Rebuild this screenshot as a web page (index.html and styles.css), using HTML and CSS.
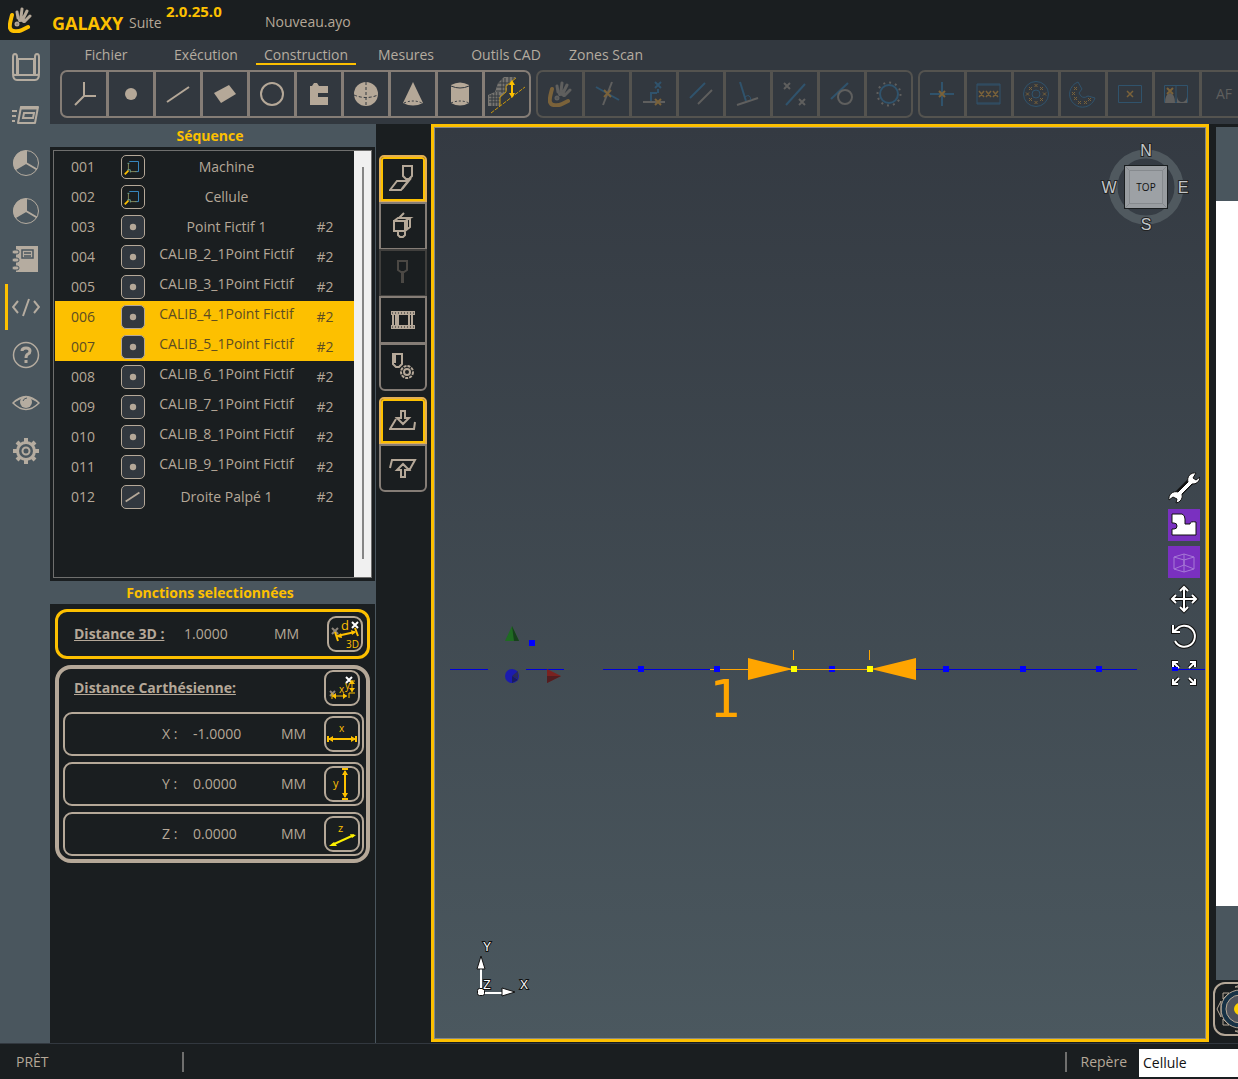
FILE: index.html
```html
<!DOCTYPE html>
<html lang="fr">
<head>
<meta charset="utf-8">
<title>GALAXY Suite - Nouveau.ayo</title>
<link rel="stylesheet" href="styles.css">
</head>
<body>
<svg class="defs" aria-hidden="true">
  <symbol id="hand" viewBox="0 0 24 26"><path class="thumb" d="M4 8C3 12 1 18 2 21c1 4 8 4 12 2l6-3" fill="none" stroke-width="4" stroke-linecap="round" stroke-linejoin="round"/><g class="fingers" fill="none" stroke-width="3" stroke-linecap="round"><path d="M10 11 9 5M13 10 14 2M15 12 19 4M17 14 22 9"/><path d="M12 13q2-1 4 1" stroke-width="4"/><circle cx="9" cy="17" r="1"/></g></symbol>
  <symbol id="point" viewBox="0 0 24 24"><circle cx="12" cy="12" r="3.500" fill="#b5a898"/></symbol>
  <symbol id="line" viewBox="0 0 24 24"><path d="M4 17 19 7" stroke="#b5a898" stroke-width="2"/></symbol>
  <symbol id="frame" viewBox="0 0 24 24"><path d="M8 6h10v11h-4" fill="none" stroke="#3a8fce"/><path d="M7 16V8M9 17h7" stroke="#8a8c5a"/><path d="M3 20 7 16" stroke="#fdc000" stroke-width="2"/><path d="M6 15h3v3M6 8h2" fill="none" stroke="#6fae9d"/></symbol>
  <symbol id="pie" viewBox="0 0 28 28"><circle cx="14" cy="14" r="12.5" fill="none" stroke="#b5aca0"/><path d="M14 14V1.500A12.500 12.500 0 0 0 3 20.500Z" fill="#b5aca0"/><path d="M14 1.500V14L3 20.500M14 14 25 20.500" fill="none" stroke="#b5aca0" stroke-width="2"/></symbol>
</svg>

<div class="app">
  <header class="header">
    <svg class="logo" width="24" height="26"><use href="#hand"/></svg>
    <span class="brand">GALAXY</span><span class="suite">Suite</span><span class="version">2.0.25.0</span>
    <span class="file">Nouveau.ayo</span>
  </header>

  <div class="body">
    <nav class="side" aria-label="Navigation">
      <button aria-label="Machine"><svg width="28" height="28" fill="none" stroke="#b5aca0" stroke-width="2"><path d="M6 6h16v16H6zM1 4q0-3 2-3t2 3v18H3q-2 0-2-2zM27 4q0-3-2-3t-2 3v18h2q2 0 2-2zM1 21q0 6 4 6h18q4 0 4-6"/></svg></button>
      <button aria-label="Pièces"><svg width="28" height="28" fill="none" stroke="#b5aca0" stroke-width="2"><path d="M9 6h17l-3 16H6z" stroke-linejoin="round"/><path d="M12 12h10l-1 5H11z"/><path d="M8 7h17" stroke-width="3"/><path d="M0 10h5M0 15h4M0 20h3"/></svg></button>
      <button aria-label="Rapport 1"><svg width="28" height="28"><use href="#pie"/></svg></button>
      <button aria-label="Rapport 2"><svg width="28" height="28"><use href="#pie"/></svg></button>
      <button aria-label="Carnet"><svg width="28" height="28"><path d="M4 1h22v26H4z" fill="#b5aca0"/><g fill="none" stroke="#4a565e"><path d="M10 5h11v8H10zM12 8h7M12 11h7" stroke-width="1.500"/></g><g fill="#b5aca0" stroke="#4a565e"><rect x="0" y="5" width="7" height="4" rx="2"/><rect x="0" y="13" width="7" height="4" rx="2"/><rect x="0" y="21" width="7" height="4" rx="2"/></g></svg></button>
      <button class="current" aria-label="Programme"><svg width="28" height="28" fill="none" stroke="#b5aca0" stroke-width="2"><path d="M6 8 1 14l5 6M22 8l5 6-5 6M17 6 11 23"/></svg></button>
      <button aria-label="Aide"><svg width="28" height="28" fill="none" stroke="#b5aca0"><circle cx="14" cy="14" r="12.500" stroke-width="1.500"/><path d="M10 10q0-3 4-3t4 3q0 2-2 3t-2 4" stroke-width="3"/><path d="M14 19v3" stroke-width="3"/></svg></button>
      <button aria-label="Affichage"><svg width="28" height="28"><path d="M1 14Q14 1 27 14 14 27 1 14z" fill="none" stroke="#b5aca0" stroke-width="1.500"/><path d="M1 14Q14 1 27 14L23 12Q14 6 5 12z" fill="#b5aca0"/><circle cx="14" cy="13" r="6" fill="#b5aca0"/><path d="M11 12q1-3 4-3" stroke="#4a565e" fill="none"/></svg></button>
      <button aria-label="Réglages"><svg width="28" height="28" fill="none" stroke="#b5aca0"><circle cx="14" cy="14" r="8.500" stroke-width="3"/><circle cx="14" cy="14" r="3.500" stroke-width="2"/><path d="M14 1v4M14 23v4M1 14h4M23 14h4M5 5l3 3M20 20l3 3M23 5l-3 3M8 20l-3 3" stroke-width="4"/></svg></button>
    </nav>

    <div class="work">
      <div class="ribbon">
        <nav class="tabs" aria-label="Menus">
          <a href="#fichier">Fichier</a><a href="#execution">Exécution</a><a href="#construction" class="active">Construction</a><a href="#mesures">Mesures</a><a href="#outils">Outils CAD</a><a href="#zones">Zones Scan</a>
        </nav>
        <div class="groups">
          <div class="group">
            <button aria-label="Repère"><svg width="40" height="40" fill="none" stroke="#b5a898" stroke-width="2"><path d="M20 8v14h12M20 22 11 31"/></svg></button>
            <button aria-label="Point"><svg width="40" height="40"><circle cx="20" cy="20" r="6" fill="#b5a898"/></svg></button>
            <button aria-label="Droite"><svg width="40" height="40"><path d="M9 28 31 13" stroke="#b5a898" stroke-width="2"/></svg></button>
            <button aria-label="Plan"><svg width="40" height="40"><path d="M9 19 24 11 31 20 16 29z" fill="#b5a898"/></svg></button>
            <button aria-label="Cercle"><svg width="40" height="40"><circle cx="20" cy="20" r="11" fill="none" stroke="#b5a898" stroke-width="2"/></svg></button>
            <button aria-label="Contour"><svg width="40" height="40"><path d="M11 12h2l2-3h3l2 3h9v7H19v4h10v8H11z" fill="#b5a898"/></svg></button>
            <button aria-label="Sphère"><svg width="40" height="40"><circle cx="20" cy="20" r="12" fill="#b5a898"/><path d="M20 8v24M8 21q12 5 24 0" stroke="#32383f" stroke-dasharray="3 2" fill="none"/></svg></button>
            <button aria-label="Cône"><svg width="40" height="40"><path d="M20 8 30 29Q20 34 10 29z" fill="#b5a898"/><path d="M11 29q9-4 18 0" stroke="#32383f" stroke-dasharray="2 2" fill="none"/></svg></button>
            <button aria-label="Cylindre"><svg width="40" height="40"><path d="M11 11q9-5 18 0v18q-9 5-18 0z" fill="#b5a898"/><path d="M11 12q9 4 18 0" stroke="#32383f" fill="none"/><path d="M11 29q9-4 18 0" stroke="#32383f" stroke-dasharray="2 2" fill="none"/></svg></button>
            <button aria-label="Distance surface"><svg width="40" height="40"><path d="M11 9 17 3H29L20 12V16L13 24V32H1V21L8 18z" fill="#777571"/><path d="M2 22h11M2 25h11M2 28h11M5 20v12M8 18v14M11 18v14M11 9h12M10 13h10M9 17h10M15 5v14M18 4v14M22 3v8M26 3v4" stroke="#32383f"/><path d="M29 4 19 12v6l-6 5v9" stroke="#c7960c" fill="none"/><path d="M4 39 38 13" stroke="#c7960c" stroke-dasharray="4 1"/><path d="M25 9v12" stroke="#fdc000" stroke-width="2"/><path d="M25 6l3 5h-6zM25 24l3-5h-6z" fill="#fdc000"/></svg></button>
          </div>
          <div class="group off">
            <button disabled aria-label="Palpage manuel"><svg class="dimhand" width="24" height="26"><use href="#hand"/></svg></button>
            <button disabled aria-label="Intersection"><svg width="40" height="40" fill="none" stroke-width="2"><path d="M9 13 32 26" stroke="#30536c"/><path d="M25 8 16 31" stroke="#5f5f5e"/><path d="M17 16l7 7M24 16l-7 7" stroke="#7a623a"/></svg></button>
            <button disabled aria-label="Projection"><svg width="40" height="40" fill="none" stroke-width="2"><path d="M21 8l6 6M27 8l-6 6M24 15v4M17 27V19h6" stroke="#30536c"/><path d="M9 28h22" stroke="#5f5f5e"/><path d="M21 25l6 6M27 25l-6 6" stroke="#7a623a"/></svg></button>
            <button disabled aria-label="Parallèle"><svg width="40" height="40"><path d="M9 24 24 9" stroke="#30536c" stroke-width="2"/><path d="M17 30 31 16" stroke="#5f5f5e" stroke-width="2"/></svg></button>
            <button disabled aria-label="Perpendiculaire"><svg width="40" height="40" fill="none"><path d="M12 8 18 27" stroke="#30536c" stroke-width="2"/><path d="M9 31 30 24" stroke="#5f5f5e" stroke-width="2"/><path d="M17 23q5-4 6 3" stroke="#30536c"/></svg></button>
            <button disabled aria-label="Milieu"><svg width="40" height="40"><path d="M11 31 30 10" stroke="#30536c" stroke-width="2"/><path d="M9 9l6 6M15 9l-6 6M24 25l6 6M30 25l-6 6" stroke="#5f5f5e" stroke-width="2"/></svg></button>
            <button disabled aria-label="Tangente"><svg width="40" height="40" fill="none"><path d="M9 25 26 9" stroke="#30536c" stroke-width="2"/><circle cx="23" cy="23" r="7" stroke="#5f5f5e" stroke-width="2"/></svg></button>
            <button disabled aria-label="Cercle par points"><svg width="40" height="40" fill="none"><circle cx="20" cy="20" r="9" stroke="#30536c" stroke-width="2"/><circle cx="20" cy="20" r="11.500" stroke="#5f5f5e" stroke-width="2" stroke-dasharray="2 4"/></svg></button>
          </div>
          <div class="group off last">
            <button disabled aria-label="Point"><svg width="40" height="40"><path d="M20 8v24M8 20h24" stroke="#30536c" stroke-width="2"/><path d="M17 17l6 6M23 17l-6 6" stroke="#7a623a" stroke-width="2"/></svg></button>
            <button disabled aria-label="Bande"><svg width="40" height="40" fill="none"><path d="M8 10h23v20H8z" stroke="#30536c"/><path d="M8 11h23M8 29h23" stroke="#30536c"/><path d="M10 17l5 6M15 17l-5 6M17 17l5 6M22 17l-5 6M24 17l5 6M29 17l-5 6" stroke="#7a623a" stroke-width="1.500"/></svg></button>
            <button disabled aria-label="Couronne"><svg width="40" height="40" fill="none"><circle cx="20" cy="20" r="12.500" stroke="#30536c"/><circle cx="20" cy="20" r="4" stroke="#30536c"/><path d="M18.500 10l3 3M21.500 10l-3 3M18.500 27l3 3M21.500 27l-3 3M10 18.500l3 3M13 18.500l-3 3M27 18.500l3 3M30 18.500l-3 3M13 13l3 3M16 13l-3 3M24 13l3 3M27 13l-3 3M13 24l3 3M16 24l-3 3M24 24l3 3M27 24l-3 3" stroke="#7a623a"/></svg></button>
            <button disabled aria-label="Arc"><svg width="40" height="40" fill="none"><path d="M15 8A13 13 0 1 0 32 24L25 22Q19 26 16 19L19 15z" stroke="#30536c"/><path d="M11 13l3 3M14 13l-3 3M9 18l3 3M12 18l-3 3M11 23l3 3M14 23l-3 3M15 27l3 3M18 27l-3 3M21 27l3 3M24 27l-3 3M25 24l3 3M28 24l-3 3" stroke="#7a623a"/></svg></button>
            <button disabled aria-label="Rectangle"><svg width="40" height="40" fill="none"><path d="M8.500 11.500h23v17h-23z" stroke="#30536c"/><path d="M17 17l6 6M23 17l-6 6" stroke="#7a623a" stroke-width="1.500"/></svg></button>
            <button disabled aria-label="Image"><svg width="40" height="40" fill="none"><path d="M7.500 11.500h23v17h-23zM19 12v17" stroke="#30536c"/><path d="M8 29q0-9 5-10 5 1 5 10zM20 23q1 5 5 5t5-5v6H20z" fill="#5f5f5e"/><path d="M10 14l6 6M16 14l-6 6" stroke="#7a623a" stroke-width="2"/></svg></button>
            <button disabled>AF</button>
          </div>
        </div>
      </div>

      <div class="main">
        <section class="panel">
          <h2>Séquence</h2>
          <div class="list">
            <table>
              <tbody>
                <tr><td>001</td><td><svg class="ico plain"><use href="#frame"/></svg></td><td>Machine</td><td></td></tr>
                <tr><td>002</td><td><svg class="ico plain"><use href="#frame"/></svg></td><td>Cellule</td><td></td></tr>
                <tr><td>003</td><td><svg class="ico"><use href="#point"/></svg></td><td>Point Fictif 1</td><td>#2</td></tr>
                <tr><td>004</td><td><svg class="ico"><use href="#point"/></svg></td><td class="long">CALIB_2_1Point Fictif</td><td>#2</td></tr>
                <tr><td>005</td><td><svg class="ico"><use href="#point"/></svg></td><td class="long">CALIB_3_1Point Fictif</td><td>#2</td></tr>
                <tr class="sel"><td>006</td><td><svg class="ico"><use href="#point"/></svg></td><td class="long">CALIB_4_1Point Fictif</td><td>#2</td></tr>
                <tr class="sel"><td>007</td><td><svg class="ico"><use href="#point"/></svg></td><td class="long">CALIB_5_1Point Fictif</td><td>#2</td></tr>
                <tr><td>008</td><td><svg class="ico"><use href="#point"/></svg></td><td class="long">CALIB_6_1Point Fictif</td><td>#2</td></tr>
                <tr><td>009</td><td><svg class="ico"><use href="#point"/></svg></td><td class="long">CALIB_7_1Point Fictif</td><td>#2</td></tr>
                <tr><td>010</td><td><svg class="ico"><use href="#point"/></svg></td><td class="long">CALIB_8_1Point Fictif</td><td>#2</td></tr>
                <tr><td>011</td><td><svg class="ico"><use href="#point"/></svg></td><td class="long">CALIB_9_1Point Fictif</td><td>#2</td></tr>
                <tr><td>012</td><td><svg class="ico"><use href="#line"/></svg></td><td>Droite Palpé 1</td><td>#2</td></tr>
              </tbody>
            </table>
            <div class="scroll"><div class="thumbbar"></div></div>
          </div>
          <h2>Fonctions selectionnées</h2>
          <div class="cards">
            <div class="card gold">
              <span class="name">Distance 3D :</span><span class="val">1.0000</span><span class="unit">MM</span>
              <button class="fn" aria-label="Distance 3D"><svg width="32" height="32" fill="none"><path d="M3 10l6 6M9 10l-6 6" stroke="#8e857b" stroke-width="2"/><path d="M23 4l6 6M29 4l-6 6" stroke="#fff" stroke-width="2"/><path d="M8 18 26 14M6 14l3 9M26 10l3 8" stroke="#fdc000" stroke-width="2"/><path d="M8 19l4-4 1 5zM27 14l-5-2 1 5z" fill="#fdc000"/><text x="12" y="12" class="t13">d</text><text x="17" y="30" class="t9">3D</text></svg></button>
            </div>
            <div class="card cart">
              <div class="row head"><span class="name">Distance Carthésienne:</span>
                <button class="fn" aria-label="Distance cartésienne"><svg width="32" height="32" fill="none"><path d="M4 19l5 5M9 19l-5 5" stroke="#8e857b" stroke-width="2"/><path d="M20 5l6 6M26 5l-6 6" stroke="#fff" stroke-width="2"/><path d="M6 24h15M6 21v6M23 26v-5h6M26 9v11M24 9h5" stroke="#fdc000"/><path d="M6 24l4-3v6zM21 24l-4-3v6zM26 8l3 4h-6zM26 20l3-4h-6z" fill="#fdc000"/><text x="13" y="21" class="t9">x</text><text x="19" y="17" class="t9">y</text></svg></button></div>
              <div class="row box"><span class="axis">X :</span><span class="val">-1.0000</span><span class="unit">MM</span>
                <button class="fn" aria-label="Distance X"><svg width="32" height="32" fill="none"><path d="M3 21h26M2 18v6M30 18v6" stroke="#fdc000" stroke-width="2"/><path d="M2 21l5-3v6zM30 21l-5-3v6z" fill="#fdc000"/><text x="13" y="14" class="t9">x</text></svg></button></div>
              <div class="row box"><span class="axis">Y :</span><span class="val">0.0000</span><span class="unit">MM</span>
                <button class="fn" aria-label="Distance Y"><svg width="32" height="32" fill="none"><path d="M19 3v26M16 1h6M16 31h6" stroke="#fdc000" stroke-width="2"/><path d="M19 2l3 5h-6zM19 30l3-5h-6z" fill="#fdc000"/><text x="7" y="19" class="t11">y</text></svg></button></div>
              <div class="row box"><span class="axis">Z :</span><span class="val">0.0000</span><span class="unit">MM</span>
                <button class="fn" aria-label="Distance Z"><svg width="32" height="32" fill="none"><path d="M6 27 28 17" stroke="#fdf000" stroke-width="2"/><path d="M3 28l5-4 3 4zM30 17l-6-1 2 4z" fill="#fdf000"/><text x="12" y="14" class="t11">z</text></svg></button></div>
            </div>
          </div>
        </section>

        <aside class="tools">
          <div class="stack">
            <button class="on" aria-label="Palper un plan"><svg width="28" height="28"><path d="M14 1h9v10l-3 3h-3l-3-3zM8 16h11l-7 9H1z"/><path d="M22 13 13 24M19 14l-1 3"/></svg></button>
            <button aria-label="Palpeur"><svg width="28" height="28"><path d="M5 9h11v10H5zM5 9l4-3h12l-5 3M21 6v9l-5 4M9 20v3l2 2h3l2-2v-3M10 6l5-5M18 8v9"/></svg></button>
            <button disabled aria-label="Stylet"><svg width="28" height="28"><path d="M9 2h9v9l-3 2h-3L9 11zM13 14v10M14 14v10"/></svg></button>
            <button aria-label="Portique"><svg width="28" height="28"><path d="M2 7h24M2 21h24" stroke-width="4"/><path class="hole" d="M3 7h22M3 21h22"/><path d="M7 9v10M9 9v10M20 9v10M23 9v10M4 9v10"/></svg></button>
            <button aria-label="Réglage palpeur"><svg width="28" height="28"><path d="M4 1h9v10l-3 3H7l-3-3zM6 1v9"/><circle cx="18" cy="19" r="6" stroke-width="2" stroke-dasharray="3 1"/><circle cx="18" cy="19" r="3"/></svg></button>
          </div>
          <div class="stack">
            <button class="on" aria-label="Approche"><svg width="28" height="28"><path d="M7 12 1 22h24l1-7M12 4h4v7h4l-6 6-6-6h4z"/></svg></button>
            <button aria-label="Dégagement"><svg width="28" height="28"><path d="M1 14 3 6h23l-5 9h-3M12 23h4v-7h4l-6-6-6 6h4z"/></svg></button>
          </div>
        </aside>

        <section class="view" aria-label="Vue 3D">
          <svg class="scene" viewBox="435 128 770 910">
            <circle cx="1146" cy="187" r="33" fill="none" stroke="#50595f" stroke-width="9"/>
            <rect x="1124.500" y="165.500" width="43" height="43" fill="#999da1" stroke="#1a1e20"/>
            <rect x="1129.500" y="170.500" width="33" height="33" fill="#9da1a5" stroke="#868a8e"/>
            <path d="M1125 166l5 5M1167 166l-5 5M1125 208l5-5M1167 208l-5-5" stroke="#868a8e"/>
            <text x="1146" y="191" class="top">TOP</text>
            <g class="compass"><text x="1146" y="156">N</text><text x="1183" y="193">E</text><text x="1146" y="230">S</text><text x="1109" y="193">W</text></g>
            <path d="M450 669.500h38M526 669.500h38M603 669.500h107M915 669.500h222M1175 669.500h30" stroke="#0000d8"/>
            <path d="M512 626 519 641H505z" fill="#1f6b22"/><path d="M512 626 519 641H514z" fill="#17401c"/>
            <circle cx="512" cy="676" r="7" fill="#1c1cae"/><path d="M512 676 518 671v8z" fill="#2a2a5c"/><path d="M512 676v7l6-3z" fill="#1a1c60"/>
            <path d="M547 669 561 676 547 683z" fill="#7a2220"/><path d="M547 676h14l-14 7z" fill="#521d20"/>
            <path d="M710 669.500h160M793.500 650v10M869.500 650v10" stroke="#ffa500"/>
            <path d="M748 658 793 669 748 680zM916 658 871 669 916 680z" fill="#ffa500"/>
            <g fill="#0000ff"><path d="M529 640h6v6h-6zM638 666h6v6h-6zM714 666h6v6h-6zM829 666h6v6h-6zM943 666h6v6h-6zM1020 666h6v6h-6zM1096 666h6v6h-6z"/></g>
            <path d="M829 669.500h6" stroke="#ffa500"/>
            <path d="M791 666h6v6h-6zM867 666h6v6h-6z" fill="#ffff00"/>
            <text x="709" y="717" class="mark">1</text>
            <g stroke="#111" fill="#fff"><path d="M480 968h2v24h20v2h-22z" stroke="none"/><path d="M481 956 485 969H477zM515 992 502 996V988z"/><rect x="477.500" y="988.500" width="7" height="7" rx="2"/></g>
            <g class="axes"><text x="487" y="951">Y</text><text x="524" y="989">X</text><text x="487" y="989">Z</text></g>
          </svg>
          <div class="viewtools">
            <button aria-label="Outils"><svg width="32" height="32"><path d="M8 24 24 8" stroke="#111" stroke-width="7"/><path d="M28 1a7 7 0 0 0-8 9L10 20a7 7 0 0 0-9 8l4-3 4 2-1 4a7 7 0 0 0 6-9L24 12a7 7 0 0 0 8-7l-4 3-3-2z" fill="#fff" stroke="#111"/></svg></button>
            <button class="violet" aria-label="Pièce"><svg width="32" height="32"><path d="M4 5h10q3 1 3 5v5h5q0-3 6-2v13H4v-6h2q3 0 3-3t-3-3H4z" fill="#fff" stroke="#111"/></svg></button>
            <button class="violet" aria-label="Filaire"><svg width="32" height="32" fill="none" stroke="#a678d6"><path d="M6 11 16 8l10 3v12l-10 3-10-3zM6 11l10 3 10-3M16 14v12M16 8v11L6 23M16 19l10 4"/></svg></button>
            <button aria-label="Déplacer"><svg width="32" height="32" fill="none"><path class="ol" d="M16 5v22M5 16h22M12 8l4-4 4 4M12 24l4 4 4-4M8 12l-4 4 4 4M24 12l4 4-4 4"/><path class="wl" d="M16 5v22M5 16h22M12 8l4-4 4 4M12 24l4 4 4-4M8 12l-4 4 4 4M24 12l4 4-4 4"/></svg></button>
            <button aria-label="Tourner"><svg width="32" height="32" fill="none"><path class="ol" d="M7 21A10.500 10.500 0 1 0 8 10M5 5v7h7M5 12l6-5"/><path class="wl" d="M7 21A10.500 10.500 0 1 0 8 10M5 5v7h7M5 12l6-5"/></svg></button>
            <button aria-label="Ajuster"><svg width="32" height="32" fill="none"><path class="ol" d="M5 10V5h5M5 5l6 6M22 5h5v5M27 5l-6 6M5 22v5h5M5 27l6-6M22 27h5v-5M27 27l-6-6"/><path class="wl" d="M5 10V5h5M5 5l6 6M22 5h5v5M27 5l-6 6M5 22v5h5M5 27l6-6M22 27h5v-5M27 27l-6-6"/><path d="M4 10h6v4H4z" fill="#00f"/><path d="M4 12.500h28" stroke="#0000d8"/></svg></button>
          </div>
        </section>

        <aside class="strip">
          <div class="cap"></div><div class="sheet"></div><div class="cap"></div>
          <div class="dock"><button class="joy" aria-label="Joystick"><svg width="50" height="50"><circle cx="25" cy="25" r="19" fill="#173246" stroke="#b5a898"/><circle cx="25" cy="25" r="14" fill="#4d525c" stroke="#b5a898"/><circle cx="25" cy="25" r="6" fill="#fdd000"/><path d="M6 17 2 25 6 33zM8 9h6l-6 6zM8 41h6l-6-6zM20 3l5-2 5 2zM20 47l5 2 5-2z" fill="none" stroke="#b5a898"/></svg></button></div>
        </aside>
      </div>
    </div>
  </div>

  <footer class="footer">
    <span class="state">PRÊT</span><span class="bar"></span>
    <span class="bar right"></span>
    <label for="repere">Repère</label>
    <select id="repere"><option>Cellule</option></select>
  </footer>
</div>
</body>
</html>
```
FILE: styles.css
```css
* { box-sizing: border-box; }

body {
  margin: 0;
  background: #1a1e20;
  color: #b5a898;
  font: 14px/20px "Open Sans", "Noto Sans", sans-serif;
  overflow: hidden;
}

button {
  padding: 0;
  border: 0;
  background: none;
  color: inherit;
  font: inherit;
  display: flex;
  align-items: center;
  justify-content: center;
  flex: none;
}

svg { display: block; flex: none; }
.defs { position: absolute; width: 0; height: 0; }

.app { display: flex; flex-direction: column; height: 100vh; }

/* title bar */
.header { display: flex; height: 40px; flex: none; padding-left: 8px; align-items: center; }
.logo { --thumb: #fdc000; --fingers: #b5a898; margin-right: 20px; }
.dimhand { --thumb: #7a623a; --fingers: #5f5f5e; }
.thumb { stroke: var(--thumb); }
.fingers { stroke: var(--fingers); }
.brand { color: #fdc000; font-size: 18px; font-weight: 700; width: 77px; padding-top: 5px; }
.suite { width: 37px; padding-top: 6px; }
.version { color: #fdc000; font-size: 15px; font-weight: 700; width: 99px; padding-bottom: 18px; }
.file { padding-top: 3px; }

.body { display: flex; flex: 1; min-height: 0; }

/* left navigation */
.side { width: 50px; flex: none; background: #4a565e; padding-top: 3px; }
.side button { width: 50px; height: 48px; padding-left: 2px; }
.side .current { background: linear-gradient(#fdc000, #fdc000) 5px 1px / 3px 46px no-repeat; }

.work { display: flex; flex-direction: column; flex: 1; min-width: 0; }

/* ribbon */
.ribbon { height: 84px; flex: none; background: #32383f; overflow: hidden; }
.tabs { display: flex; height: 30px; padding-left: 6px; }
.tabs a { width: 100px; height: 25px; padding-top: 5px; color: #b5aca0; text-align: center; text-decoration: none; }
.tabs .active { border-bottom: 2px solid #fdc000; }
.groups { display: flex; gap: 5px; padding-left: 10px; }
.group { display: flex; flex: none; gap: 3px; padding: 2px; background: #857d76; border-radius: 7px; }
.group button { width: 44px; height: 44px; background: #32383f; }
.group button:first-child { border-radius: 5px 0 0 5px; }
.group button:last-child { border-radius: 0 5px 5px 0; }
.off { background: #54534f; }
.off button { color: #5f5f5e; }

.main { display: flex; flex: 1; min-height: 0; }

/* sequence and functions */
.panel { width: 326px; flex: none; border-right: 1px solid #4a565e; }
h2 { margin: 0; height: 23px; padding-right: 5px; background: #4a565e; color: #fdc000; font-size: 14px; line-height: 23px; font-weight: 700; text-align: center; }
.list { display: flex; justify-content: space-between; align-items: flex-start; height: 428px; margin: 3px; border: 1px solid #6f6f6e; }
table { width: 300px; margin-left: 1px; border-collapse: collapse; table-layout: fixed; }
tr { height: 30px; }
td { padding: 1px 0 0; text-align: center; }
td:nth-child(1) { width: 56px; }
td:nth-child(2) { width: 44px; }
td:nth-child(3) { width: 143px; }
td:nth-child(4) { padding-right: 2px; }
.long { padding-bottom: 5px; }
.sel { background: #fdc000; color: #5c4c22; }
.ico { width: 24px; height: 24px; margin: 0 auto; border: 1px solid #b5a898; border-radius: 5px; background: #32383f; }
.plain { background: #1a1e20; }
.scroll { width: 17px; height: 426px; padding: 16px 0 18px 8px; background: #f0f0f0; }
.thumbbar { width: 2px; height: 392px; background: #858585; }

.cards { display: flex; flex-direction: column; gap: 6px; padding: 5px; }
.card { display: flex; border-radius: 12px; }
.gold { height: 50px; align-items: center; border: 3px solid #fdc000; padding: 0 4px 0 16px; }
.name { font-weight: 700; text-decoration: underline; white-space: nowrap; }
.gold .name { width: 110px; }
.gold .val { width: 90px; }
.unit { flex: 1; }
.cart { flex-direction: column; gap: 6px; border: 4px solid #b5a898; border-radius: 16px; padding: 1px 2px 3px 4px; }
.row { display: flex; align-items: center; height: 44px; padding-right: 2px; border-radius: 9px; }
.head { height: 36px; justify-content: space-between; padding: 0 4px 0 11px; }
.box { border: 2px solid #b5a898; }
.axis { width: 128px; padding-left: 97px; white-space: nowrap; }
.box .val { width: 88px; }
.fn { width: 36px; height: 36px; border: 2px solid #b5a898; border-radius: 9px; }
.fn text { fill: #fdc000; }
.t13 { font-size: 13px; }
.t11 { font-size: 11px; }
.t9 { font-size: 10px; }

/* probe tools */
.tools { display: flex; flex-direction: column; gap: 6px; width: 55px; flex: none; padding: 31px 4px 0 3px; }
.stack button { width: 48px; height: 48px; border: 2px solid #857d76; }
.stack button + button { margin-top: -1px; }
.stack button:first-child { border-radius: 5px 5px 0 0; }
.stack button:last-child { border-radius: 0 0 6px 6px; }
.stack .on { border-color: #e2af55; box-shadow: inset 0 0 0 2px #fdc000; }
.stack button:disabled { border-color: #403f3d; }
.stack svg { fill: none; stroke: #b5a898; stroke-width: 2px; }
.stack button:disabled svg { stroke: #4b4844; }
.stack .hole { stroke: #1a1e20; stroke-dasharray: 1 2; stroke-width: 1px; }

/* 3D view */
.view { position: relative; flex: 1; min-width: 0; margin-bottom: 1px; border: 3px solid #fdc000; background: linear-gradient(#343a42, #4b585f); box-shadow: inset 0 0 0 1px #85888a; }
.scene { width: 100%; height: 100%; padding: 1px; }
.scene text { text-anchor: middle; }
.top { font-size: 10px; fill: #111; }
.compass text { font: 16px "Liberation Sans", sans-serif; fill: #c3c6c8; stroke: #222; stroke-width: 2px; paint-order: stroke; }
.axes text { font: 12px "Liberation Sans", sans-serif; fill: #fff; stroke: #111; stroke-width: 2px; paint-order: stroke; }
.scene .mark { font: 52px "DejaVu Sans Mono", monospace; fill: #ffa500; text-anchor: start; }
.viewtools { position: absolute; top: 0; bottom: 0; right: 6px; display: flex; flex-direction: column; justify-content: center; gap: 5px; padding-bottom: 6px; }
.viewtools button { width: 32px; height: 32px; }
.violet { background: #7a30c0; }
.ol { stroke: #111; stroke-width: 4px; }
.wl { stroke: #fff; stroke-width: 2px; }

/* right strip */
.strip { display: flex; flex-direction: column; width: 29px; flex: none; padding: 3px 0 0 7px; }
.cap { height: 74px; flex: none; background: #4a565e; }
.sheet { flex: 1; background: #fff; }
.dock { height: 63px; flex: none; margin-left: -3px; padding-top: 2px; overflow: hidden; }
.joy { width: 54px; height: 54px; border: 2px solid #b5a898; border-radius: 12px; }

/* status bar */
.footer { display: flex; height: 36px; flex: none; align-items: center; border-top: 1px solid #32383f; padding-left: 16px; }
.state { width: 166px; }
.bar { width: 2px; height: 20px; background: #6f6f6e; }
.right { margin-left: auto; }
label { padding: 0 12px 0 13px; }
select { width: 99px; height: 28px; margin-top: 2px; padding: 0 4px; border: 0; border-radius: 0; appearance: none; background: #fff; color: #111; font: inherit; }
```
